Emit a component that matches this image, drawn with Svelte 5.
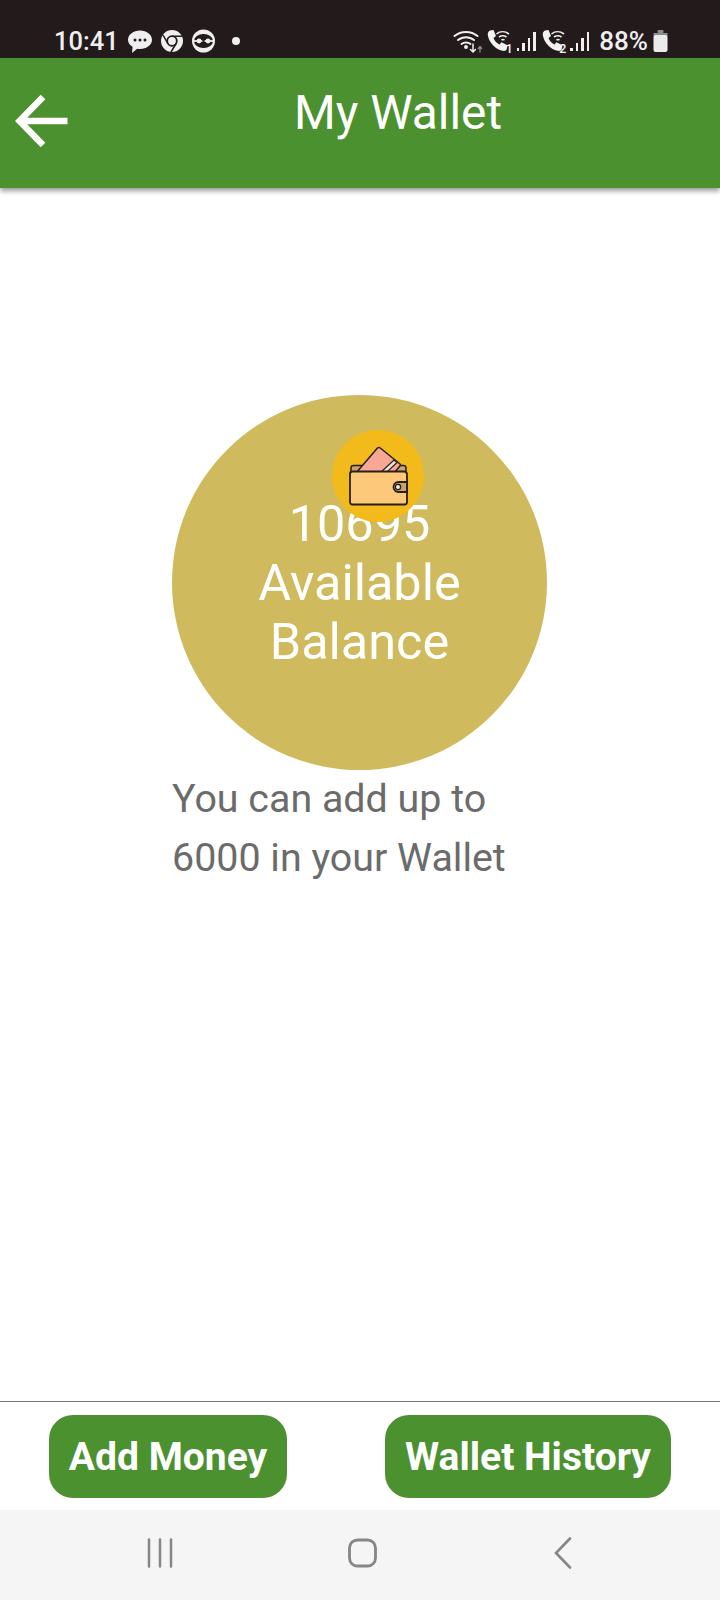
<script>
  const bars = [0, 1, 2, 3];
</script>

<div class="page">
  <div class="status">
    <div class="left">
      <span class="clock">10:41</span>
      <svg class="ico" width="26" height="26" viewBox="0 0 26 26">
        <path d="M13 2.500c6.400 0 12 4 12 9.300 0 5.200-5.600 9.300-12 9.300-1 0-1.900-.1-2.800-.3L5 25l.6-6.200C2.500 17 1 14.600 1 11.800 1 6.500 6.600 2.500 13 2.500z" fill="#f0eeee"/>
        <circle cx="8" cy="12" r="1.500" fill="#231a1b"/><circle cx="13" cy="12" r="1.500" fill="#231a1b"/><circle cx="18" cy="12" r="1.500" fill="#231a1b"/>
      </svg>
      <svg class="ico" width="24" height="24" viewBox="0 0 24 24">
        <circle cx="12" cy="12" r="11" fill="#f0eeee"/>
        <circle cx="12" cy="12" r="4.800" fill="none" stroke="#231a1b" stroke-width="1.800"/>
        <path d="M12 7.200h10M7.800 14.500 3 6M16.200 14.500 11 23" stroke="#231a1b" stroke-width="1.500" fill="none"/>
      </svg>
      <svg class="ico" width="25" height="24" viewBox="0 0 25 24">
        <circle cx="12.500" cy="12" r="11.500" fill="#f0eeee"/>
        <ellipse cx="12.500" cy="12" rx="9.500" ry="7" fill="#231a1b"/>
        <path d="M3 12h19" stroke="#f0eeee" stroke-width="1.800"/>
        <path d="M12.500 5v14" stroke="#231a1b" stroke-width="2.200"/>
        <circle cx="8" cy="12" r="2.400" fill="#f0eeee"/><circle cx="17" cy="12" r="2.400" fill="#f0eeee"/>
      </svg>
      <span class="dot"></span>
    </div>
    <div class="right">
      <svg class="wifi" width="30" height="24" viewBox="0 0 30 24" fill="none" stroke="#f0eeee" stroke-width="2" stroke-linecap="round">
        <path d="M1.500 7C8 1.500 18 1.500 24.500 7M5 11c4.500-3.800 11.500-3.800 16 0M8.500 15c2.500-2 6.500-2 9 0"/>
        <circle cx="13" cy="18" r="1" fill="#f0eeee"/>
        <path d="M20 15v8M17.500 20.500 20 23l2.500-2.500" stroke-width="1.500"/>
        <path d="M27 23v-5M25.300 19.500 27 17.500l1.700 2" stroke="#8d8a8a" stroke-width="1.300"/>
      </svg>
      <svg class="call" width="24" height="24" viewBox="0 0 24 24">
        <path d="M4 1.500 7.500 1l2.500 6-2.500 2c1 3 3 5 6 6.500l2-2.200 6 3-.8 4c-.4 1.500-2.500 1.900-4.200 1.500C9 20 3 13.500 1.800 6 1.500 4 2.500 2 4 1.500z" fill="#f4f2f2"/>
        <path d="M10.500 5C14 2 19 2 23 5M13 8c2.500-1.700 5-1.700 7.500 0M15.500 11c1-.7 2-.7 3 0" stroke="#f0eeee" stroke-width="1.600" fill="none"/>
      </svg>
      <span class="sim one">1</span>
      <span class="signal">{#each bars as b}<i class="bar b{b}"></i>{/each}</span>
      <svg class="call" width="24" height="24" viewBox="0 0 24 24">
        <path d="M4 1.500 7.500 1l2.500 6-2.500 2c1 3 3 5 6 6.500l2-2.200 6 3-.8 4c-.4 1.500-2.500 1.900-4.200 1.500C9 20 3 13.500 1.800 6 1.500 4 2.500 2 4 1.500z" fill="#f4f2f2"/>
        <path d="M10.500 5C14 2 19 2 23 5M13 8c2.500-1.700 5-1.700 7.500 0M15.500 11c1-.7 2-.7 3 0" stroke="#f0eeee" stroke-width="1.600" fill="none"/>
      </svg>
      <span class="sim">2</span>
      <span class="signal">{#each bars as b}<i class="bar b{b}"></i>{/each}</span>
      <span class="pct">88%</span>
      <svg class="batt" width="15" height="22" viewBox="0 0 15 22">
        <rect x="4.500" y="0" width="6" height="3" rx="1" fill="#8f8c8c"/>
        <rect x="0.500" y="3" width="14" height="3" fill="#8f8c8c"/>
        <rect x="0.500" y="5" width="14" height="17" rx="2" fill="#ecebeb"/>
      </svg>
    </div>
  </div>

  <header class="appbar">
    <svg class="back" width="54" height="56" viewBox="0 0 54 56" fill="none" stroke="#fff" stroke-width="6.500">
      <path d="M52.500 28H6M28 4 4.500 28 28 52"/>
    </svg>
    <h1>My Wallet</h1>
  </header>

  <main class="content">
    <div class="circle">
      <div class="balance">10695<br />Available<br />Balance</div>
      <div class="badge">
        <svg width="60" height="60" viewBox="0 0 60 60">
          <path d="M3 22c0-1.500 1-2.500 2.500-2.500h50c1.500 0 2.500 1 2.500 2.500v8H3z" fill="#c9a26d" stroke="#2a1f18" stroke-width="1.500"/>
          <path d="M29.500 2c.8-.8 2-.8 2.800 0l19.700 16c.6.600.6 1.500-.1 2.100L46 27H8z" fill="#f6a795" stroke="#2a1f18" stroke-width="1.500" stroke-linejoin="round"/>
          <path d="M33 26l13-12 3 2.500L39 26z" fill="#e8e4da" stroke="#2a1f18" stroke-width="1.200"/>
          <path d="M2 28c0-1.500.8-2.500 2.500-2.500H56c2 0 3 1.200 3 3v27.500c0 1.500-1 2.500-2.500 2.500h-52C3 58.500 2 57.500 2 56z" fill="#fdc879" stroke="#2a1f18" stroke-width="1.800"/>
          <path d="M59 36H50.500a5 5 0 0 0 0 10H59z" fill="#c9a26d" stroke="#2a1f18" stroke-width="1.800"/>
          <circle cx="50" cy="41" r="2.600" fill="#f3efe6" stroke="#2a1f18" stroke-width="1.300"/>
        </svg>
      </div>
    </div>
    <p class="hint">You can add up to<br />6000 in your Wallet</p>
  </main>

  <footer class="actions">
    <button class="first">Add Money</button>
    <button class="second">Wallet History</button>
  </footer>

  <nav class="sysnav">
    <svg width="26" height="30" viewBox="0 0 26 30" stroke="#868686" stroke-width="2.500" stroke-linecap="round">
      <path d="M2 1.500v27M13 1.500v27M24 1.500v27"/>
    </svg>
    <svg class="home" width="29" height="30" viewBox="0 0 29 30" fill="none" stroke="#868686" stroke-width="2.800">
      <rect x="1.500" y="2" width="26" height="26" rx="8"/>
    </svg>
    <svg width="18" height="32" viewBox="0 0 18 32" fill="none" stroke="#868686" stroke-width="2.600" stroke-linecap="round">
      <path d="M16 1.500 2 16l14 14.500"/>
    </svg>
  </nav>
</div>

<style>
  :global(body) {
    margin: 0;
    background: #fff;
  }
  .page {
    width: 720px;
    height: 1600px;
    display: flex;
    flex-direction: column;
    font-family: Roboto, "Liberation Sans", sans-serif;
    overflow: hidden;
  }
  .status {
    height: 58px;
    flex: none;
    box-sizing: border-box;
    padding: 24px 52px 0 54px;
    background: #231a1b;
    color: #f0eeee;
    display: flex;
    justify-content: space-between;
    align-items: center;
  }
  .left, .right {
    display: flex;
    align-items: center;
  }
  .clock {
    font-size: 25.500px;
    font-weight: 500;
    margin-right: 8px;
  }
  .ico {
    margin-right: 7px;
  }
  .dot {
    width: 8px;
    height: 8px;
    border-radius: 50%;
    background: #f0eeee;
    margin-left: 9px;
  }
  .call {
    margin-left: 3px;
  }
  .sim {
    font-size: 13px;
    font-weight: 500;
    align-self: flex-end;
    margin-left: -6px;
    line-height: 14px;
  }
  .sim.one {
    margin-left: -4px;
  }
  .signal {
    display: inline-flex;
    align-items: flex-end;
    gap: 3px;
    height: 20px;
    margin-left: 4px;
    margin-right: 2px;
  }
  .bar {
    width: 2.500px;
    background: #f0eeee;
    display: block;
  }
  .b0 { height: 3px; }
  .b1 { height: 8px; }
  .b2 { height: 13px; }
  .b3 { height: 19px; }
  .pct {
    font-size: 26px;
    font-weight: 500;
    margin-left: 8px;
    margin-right: 5px;
  }
  .appbar {
    height: 130px;
    flex: none;
    background: #4c912f;
    box-shadow: 0 3px 5px rgba(0, 0, 0, 0.4);
    position: relative;
    z-index: 1;
    display: flex;
    justify-content: center;
    padding-left: 76px;
    box-sizing: border-box;
  }
  .back {
    position: absolute;
    left: 15px;
    top: 35px;
  }
  h1 {
    margin: 23px 0 0;
    color: #fff;
    font-size: 47.800px;
    font-weight: 400;
    line-height: 64px;
  }
  .content {
    flex: 1;
    box-sizing: border-box;
    padding: 207px 0 0 172px;
  }
  .circle {
    width: 375px;
    height: 375px;
    border-radius: 50%;
    background: #d0ba5e;
    position: relative;
    display: flex;
    align-items: center;
    justify-content: center;
  }
  .balance {
    color: #fff;
    font-size: 50.400px;
    line-height: 59px;
    text-align: center;
  }
  .badge {
    position: absolute;
    left: 160px;
    top: 35px;
    width: 92px;
    height: 92px;
    border-radius: 50%;
    background: #f3ba1c;
    display: flex;
    align-items: center;
    justify-content: center;
  }
  .hint {
    margin: -1px 0 0;
    color: #6b6b6b;
    font-size: 39.400px;
    line-height: 59px;
  }
  .actions {
    height: 109px;
    flex: none;
    box-sizing: border-box;
    border-top: 1px solid #777;
    padding: 13px 49px 0 49px;
    display: flex;
    justify-content: space-between;
  }
  button {
    height: 83px;
    border: none;
    border-radius: 24px;
    background: #4c912f;
    color: #fff;
    font-family: inherit;
    font-size: 39px;
    font-weight: 700;
    padding: 0;
  }
  .first { width: 238px; }
  .second { width: 286px; }
  .sysnav {
    height: 90px;
    flex: none;
    background: #f5f5f5;
    display: flex;
    align-items: center;
    padding: 0 148px 4px 147px;
    justify-content: space-between;
    box-sizing: border-box;
  }
  .home {
    margin-left: -3px;
  }
</style>
